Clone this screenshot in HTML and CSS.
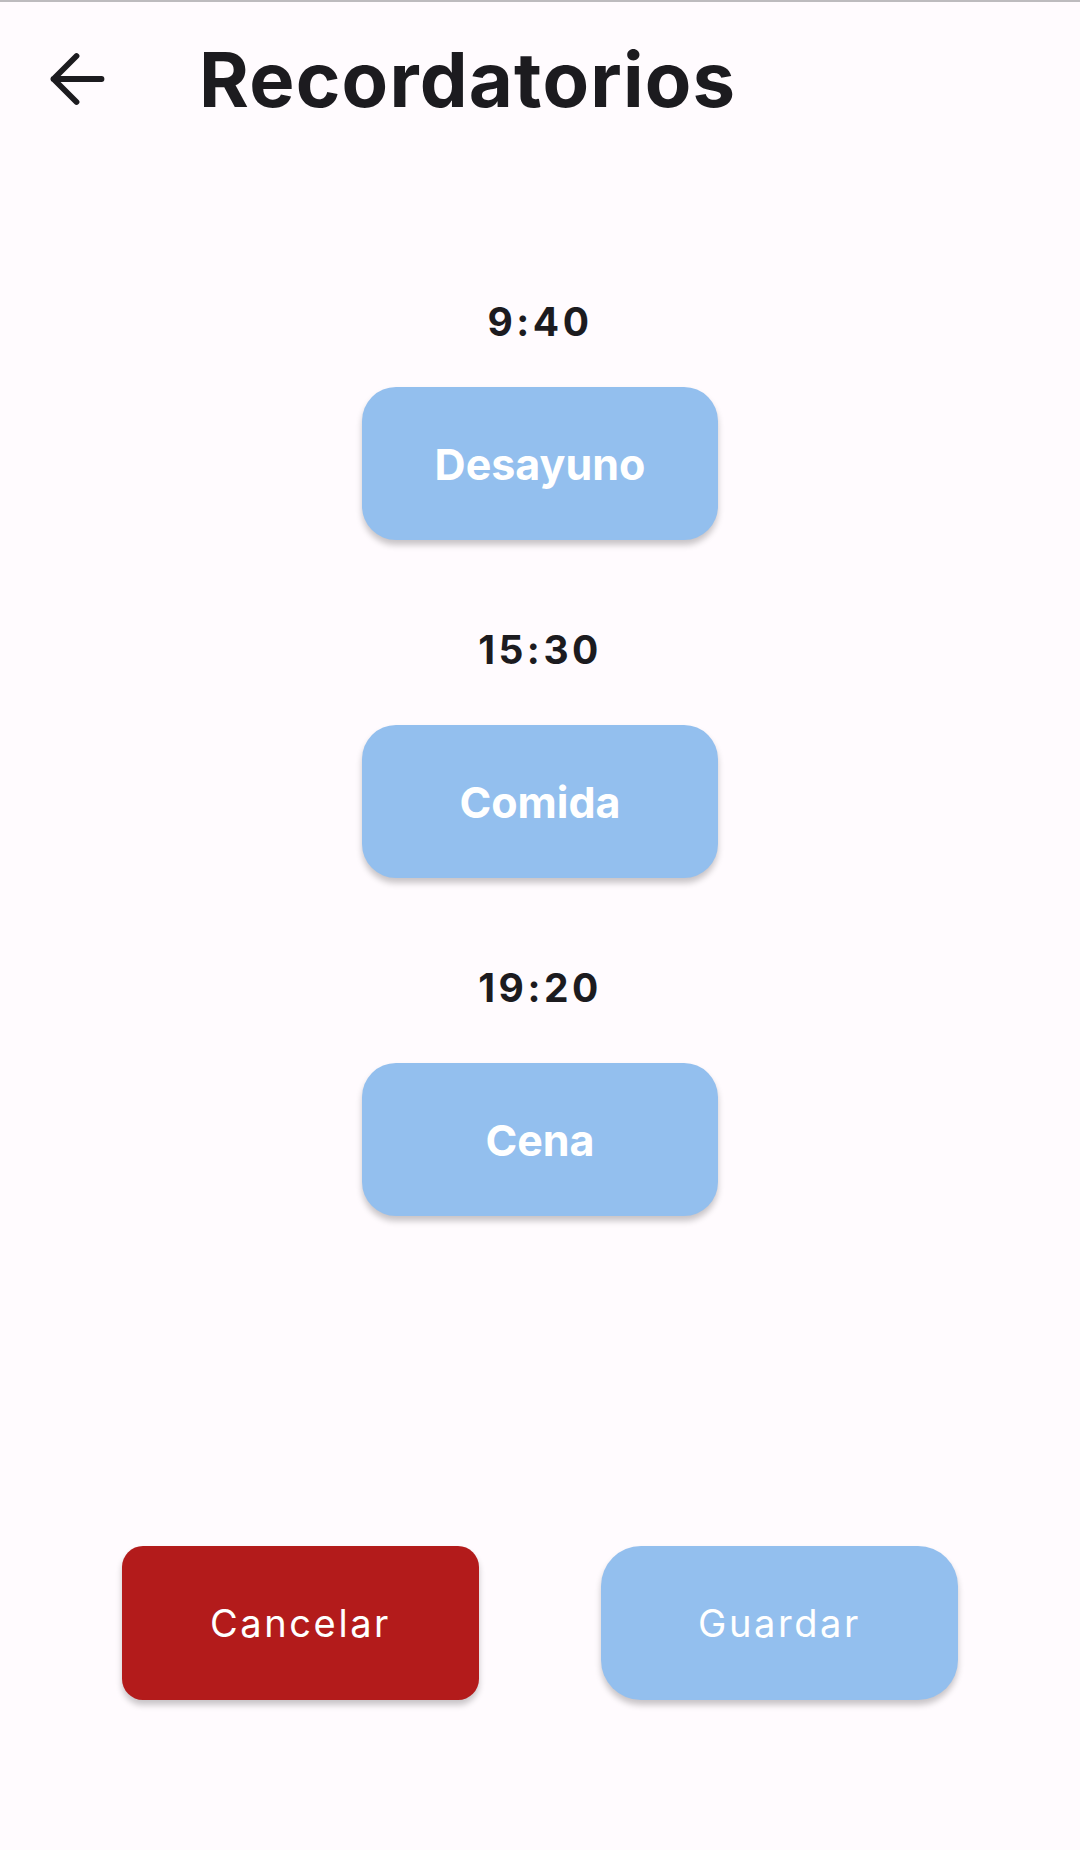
FILE: index.html
```html
<!DOCTYPE html>
<html lang="es">
<head>
<meta charset="utf-8">
<title>Recordatorios</title>
<link rel="stylesheet" href="styles.css">
</head>
<body>
<div class="screen">
  <header class="topbar">
    <button class="back" aria-label="Atrás">
      <svg width="66" height="66" viewBox="0 0 66 66" fill="none" stroke="#1c1b1f" stroke-width="5.8" stroke-linecap="round" stroke-linejoin="round">
        <path d="M57.5 33H9.5M32.5 10L9.5 33L32.5 56"/>
      </svg>
    </button>
    <h1 class="title">Recordatorios</h1>
  </header>

  <main class="slots">
    <section class="slot slot--first">
      <div class="time">9:40</div>
      <button class="meal">Desayuno</button>
    </section>
    <section class="slot">
      <div class="time">15:30</div>
      <button class="meal">Comida</button>
    </section>
    <section class="slot">
      <div class="time">19:20</div>
      <button class="meal">Cena</button>
    </section>
  </main>

  <footer class="actions">
    <button class="action action--cancel">Cancelar</button>
    <button class="action action--save">Guardar</button>
  </footer>
</div>
</body>
</html>
```

FILE: styles.css
```css
* {
  box-sizing: border-box;
}

html, body {
  margin: 0;
  padding: 0;
  background: #fffbfe;
}

body {
  font-family: Inter, "Liberation Sans", sans-serif;
  color: #1c1b1f;
}

.screen {
  width: 1080px;
  height: 1850px;
  border-top: 2px solid #bdbbbe;
  display: flex;
  flex-direction: column;
}

.topbar {
  height: 154px;
  display: flex;
  align-items: center;
  padding-left: 44px;
}

.back {
  width: 66px;
  height: 66px;
  padding: 0;
  border: 0;
  background: none;
  display: flex;
  align-items: center;
  justify-content: center;
}

.title {
  margin: 0 0 0 89px;
  font-size: 76px;
  line-height: 76px;
  font-weight: 700;
  letter-spacing: 1.2px;
  color: #1c1b1f;
}

.slots {
  display: flex;
  flex-direction: column;
  align-items: center;
  padding-top: 146px;
  gap: 90px;
}

.slot {
  display: flex;
  flex-direction: column;
  align-items: center;
  gap: 56px;
}

.slot--first {
  gap: 46px;
}

.time {
  font-size: 39px;
  line-height: 39px;
  font-weight: 700;
  letter-spacing: 3.5px;
  color: #1c1b1f;
}

.meal {
  width: 356px;
  height: 153px;
  border: 0;
  border-radius: 34px;
  background: #93bfee;
  color: #ffffff;
  font-family: Inter, "Liberation Sans", sans-serif;
  font-size: 43px;
  font-weight: 700;
  box-shadow: 0 5px 6px rgba(0, 0, 0, 0.22);
}

.actions {
  margin-top: 330px;
  display: flex;
  justify-content: space-between;
  padding: 0 122px;
}

.action {
  width: 357px;
  height: 154px;
  border: 0;
  color: #ffffff;
  font-family: Inter, "Liberation Sans", sans-serif;
  font-size: 38px;
  font-weight: 400;
  letter-spacing: 2.6px;
  box-shadow: 0 5px 6px rgba(0, 0, 0, 0.22);
}

.action--cancel {
  background: #b31b1b;
  border-radius: 21px;
}

.action--save {
  background: #93bfee;
  border-radius: 40px;
}
```
